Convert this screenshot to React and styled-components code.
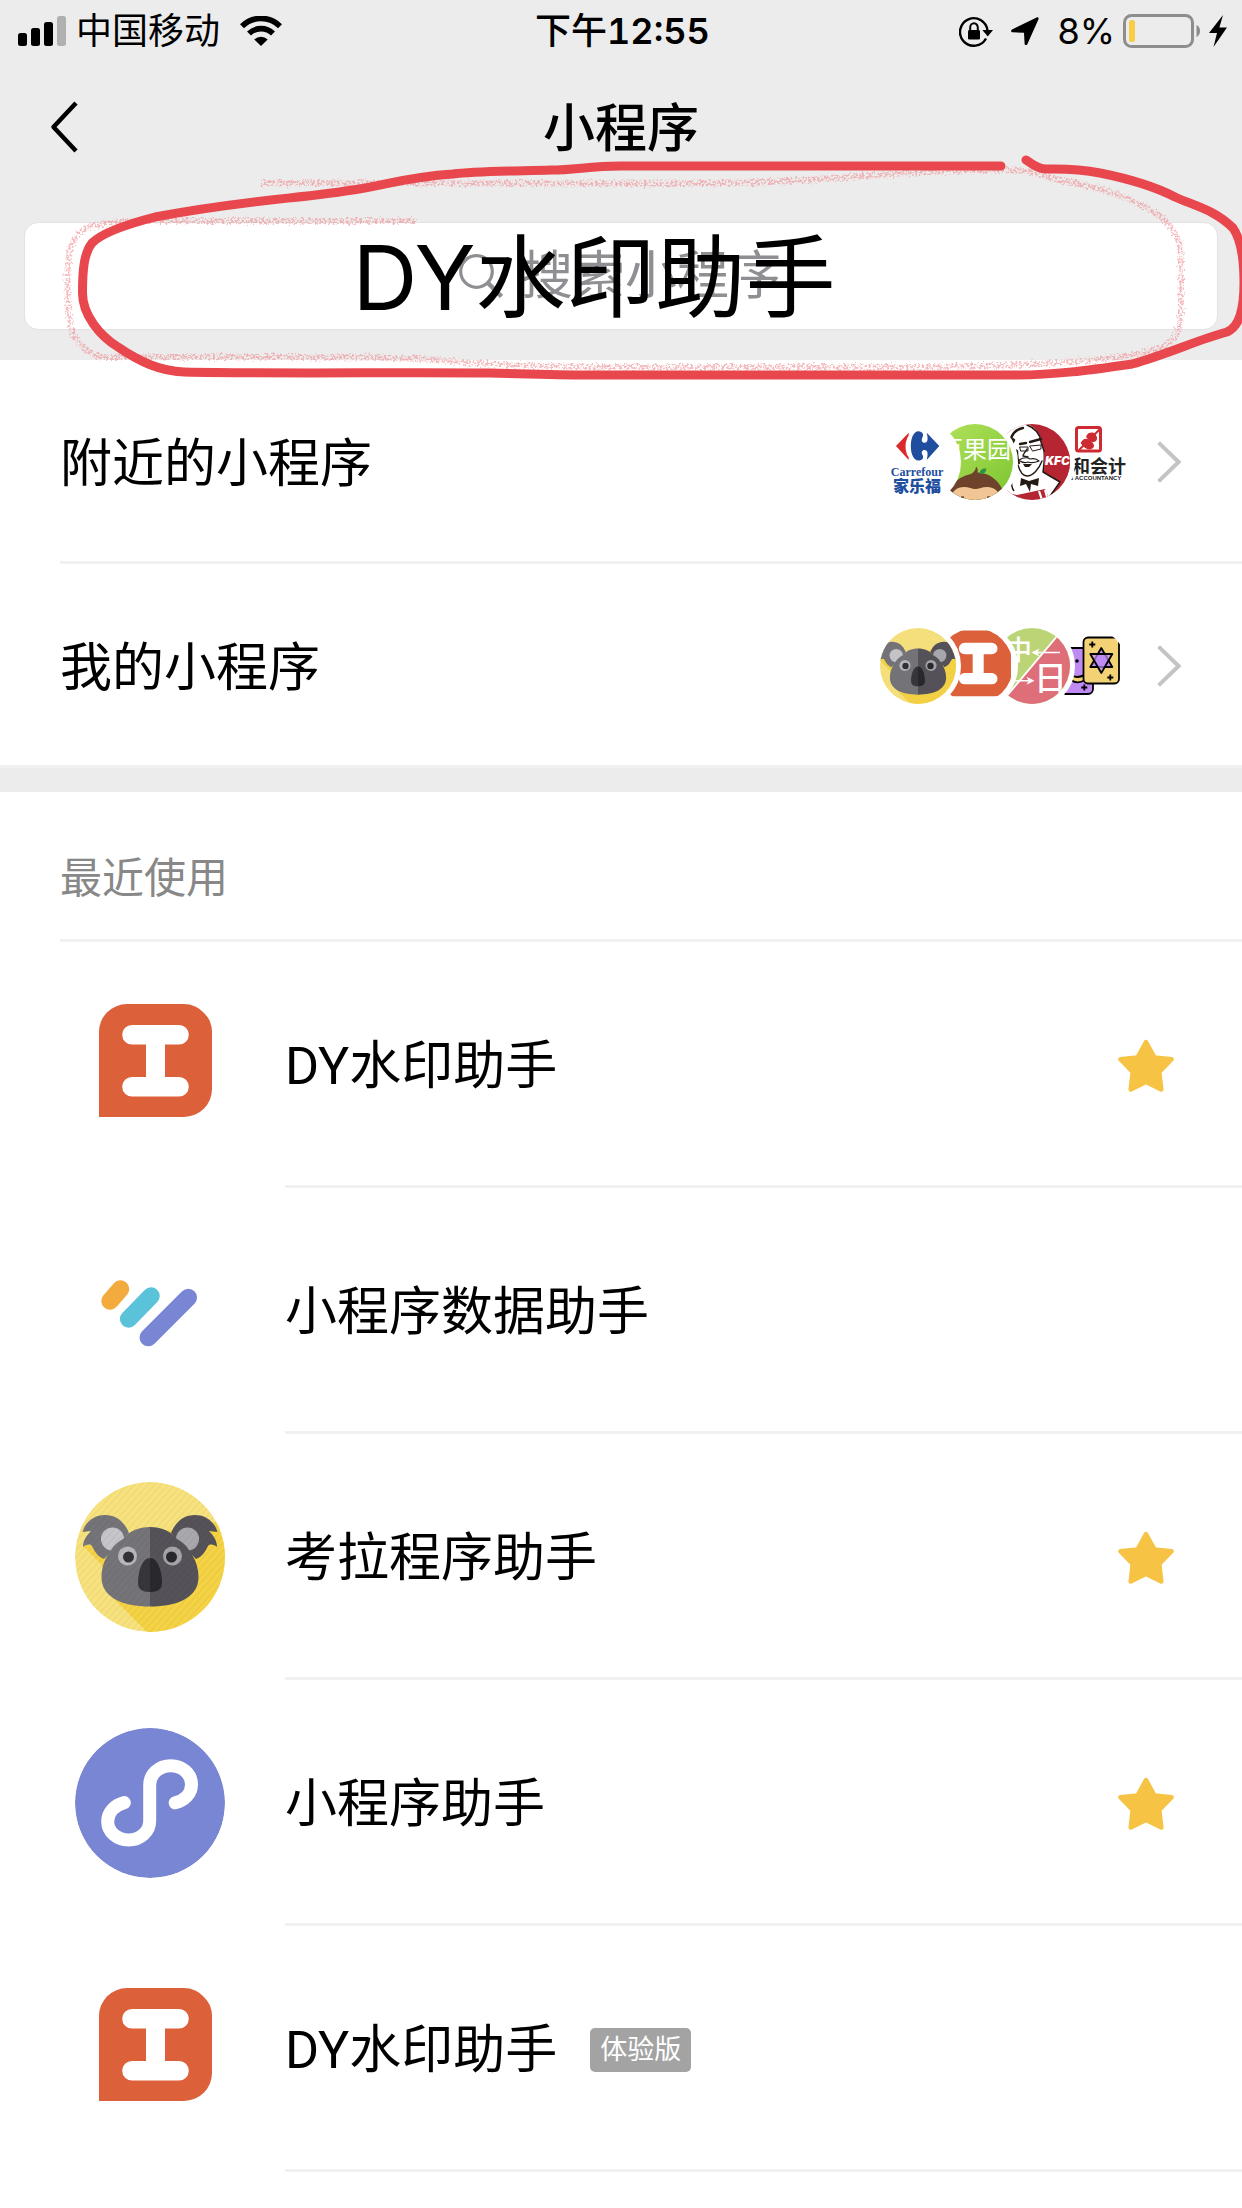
import React from 'react';
import styled, { createGlobalStyle } from 'styled-components';

const GlobalStyle = createGlobalStyle`
  * {
    box-sizing: border-box;
  }
  body {
    margin: 0;
    background: #fff;
    color: #000;
    font-family: Inter, 'Noto Sans CJK SC', sans-serif;
    overflow-x: hidden;
  }
  button {
    margin: 0;
    padding: 0;
    border: 0;
    background: none;
    color: inherit;
    font: inherit;
  }
  svg {
    display: block;
    flex-shrink: 0;
  }
`;

const Header = styled.header`
  position: relative;
  background: #ececec;
  padding-bottom: 30px;
`;

const StatusBar = styled.div`
  display: grid;
  grid-template-columns: 1fr auto 1fr;
  align-items: center;
  height: 62px;
  padding: 0 15px 0 18px;
  font-size: 36px;
  line-height: 60px;
`;

const StatusGroup = styled.div`
  display: flex;
  align-items: center;
  justify-content: ${({ $end }) => ($end ? 'flex-end' : 'flex-start')};
  gap: ${({ $gap }) => $gap}px;
`;

const Time = styled.time`
  font-weight: 500;

  b {
    font-weight: 600;
    font-variant-numeric: tabular-nums;
  }
`;

const NavBar = styled.nav`
  display: grid;
  grid-template-columns: 120px 1fr 120px;
  align-items: center;
  height: 130px;
`;

const BackButton = styled.button`
  padding-left: 50px;
`;

const Title = styled.h1`
  margin: 0;
  padding-top: 4px;
  font-size: 52px;
  font-weight: 500;
  line-height: 72px;
  text-align: center;
`;

const SearchBox = styled.label`
  display: flex;
  align-items: center;
  justify-content: center;
  gap: 18px;
  height: 108px;
  margin: 30px 24px 0;
  border: 1px solid #e2e2e2;
  border-radius: 14px;
  background: #fff;
`;

const SearchInput = styled.input`
  width: 262px;
  padding: 0;
  border: 0;
  outline: 0;
  background: none;
  font-family: inherit;
  font-size: 52px;
  line-height: 72px;

  &::placeholder {
    color: #8e8e93;
    opacity: 1;
  }
`;

const Note = styled.div`
  position: absolute;
  top: 212px;
  left: 0;
  right: 54px;
  z-index: 2;
  font-size: 90px;
  line-height: 132px;
  text-align: center;
  pointer-events: none;
`;

const Scribble = styled.svg`
  position: absolute;
  top: 150px;
  left: 0;
  z-index: 3;
  width: 100%;
  pointer-events: none;
`;

const LinkRow = styled.a`
  display: flex;
  align-items: center;
  height: 204px;
  margin-left: ${({ $inset }) => ($inset ? 60 : 0)}px;
  padding: 3px 61px 0 ${({ $inset }) => ($inset ? 0 : 60)}px;
  border-bottom: 3px solid #f1f1f1;
  color: inherit;
  text-decoration: none;
`;

const RowLabel = styled.span`
  flex: 1;
  padding-top: 3px;
  font-size: 52px;
  line-height: 72px;
`;

const Avatars = styled.span`
  display: flex;
  margin-right: 30px;
`;

const Avatar = styled.span`
  z-index: ${({ $level }) => $level};
  width: 86px;
  height: 86px;
  margin: 0 -5px 0 -24px;
  border: 5px solid #fff;
  border-radius: 50%;
  background: #fff;
  overflow: hidden;
`;

const Gap = styled.div`
  height: 24px;
  background: #ececec;
`;

const SectionTitle = styled.h2`
  margin: 0 0 0 60px;
  padding: 56px 0 31px;
  border-bottom: 3px solid #f1f1f1;
  color: #888;
  font-size: 42px;
  font-weight: 400;
  line-height: 60px;
`;

const AppList = styled.ul`
  margin: 0;
  padding: 0;
  list-style: none;
`;

const AppRow = styled.li`
  display: flex;
  height: 246px;
`;

const AppIcon = styled.div`
  width: 150px;
  height: 150px;
  margin: 48px 60px 0 75px;
  border-radius: 50%;
  overflow: hidden;
`;

const AppBody = styled.div`
  flex: 1;
  display: flex;
  align-items: center;
  padding: 4px 67px 0 0;
  border-bottom: 3px solid #f1f1f1;
`;

const AppName = styled.span`
  padding-top: 3px;
  font-family: Roboto, 'Noto Sans CJK SC', sans-serif;
  font-size: 52px;
  line-height: 72px;
`;

const Tag = styled.span`
  margin-left: 33px;
  padding: 0 10px;
  border-radius: 5px;
  background: #a3a3a3;
  color: #fff;
  font-size: 27px;
  line-height: 44px;
`;

const StarButton = styled.button`
  margin-left: auto;
`;

/* status bar icons */

const SignalIcon = () => (
  <svg width="48" height="30" viewBox="0 0 48 30" aria-hidden="true">
    <rect x="0" y="17" width="9" height="13" rx="2.5" />
    <rect x="13" y="12" width="9" height="18" rx="2.5" />
    <rect x="26" y="6" width="9" height="24" rx="2.5" />
    <rect x="39" y="0" width="9" height="30" rx="2.5" fill="#b0b0b0" />
  </svg>
);

const WifiIcon = () => (
  <svg width="42" height="30" viewBox="0 0 42 30" aria-hidden="true">
    <path d="M2 10.2a27 27 0 0 1 38 0" fill="none" stroke="#000" strokeWidth="5.6" />
    <path d="M9 17.6a17 17 0 0 1 24 0" fill="none" stroke="#000" strokeWidth="5.6" />
    <path d="M14.3 23.4a9.6 9.6 0 0 1 13.4 0L21 30z" />
  </svg>
);

const LockIcon = () => (
  <svg width="34" height="31" viewBox="0 0 34 31" aria-hidden="true">
    <path d="M27 22.5A13.8 13.8 0 1 1 28.6 15" fill="none" stroke="#000" strokeWidth="2.4" />
    <path d="M23.4 14h10.6l-5.3 6.6z" />
    <rect x="9" y="14" width="12" height="9.6" rx="1.4" />
    <path d="M11.2 14.5v-3a3.8 4.2 0 0 1 7.6 0v3" fill="none" stroke="#000" strokeWidth="2" />
  </svg>
);

const LocationIcon = () => (
  <svg width="28" height="28" viewBox="0 0 28 28" aria-hidden="true">
    <path d="M25.6.4 1 12.6c-1.5.9-1 2.5.5 2.6l11.5.6.6 11c.1 1.6 2 1.9 2.7.4L27.5 2.2C28 .8 26.9-.2 25.6.4z" />
  </svg>
);

const BatteryIcon = () => (
  <svg width="78" height="34" viewBox="0 0 78 34" aria-hidden="true">
    <rect x="1.5" y="1.5" width="68" height="31" rx="7" fill="none" stroke="#8d8d8d" strokeWidth="3" />
    <rect x="6" y="6" width="6" height="22" rx="2.5" fill="#f7cd45" />
    <path d="M73.5 11c4.8 2.4 4.8 9.6 0 12z" fill="#8d8d8d" />
  </svg>
);

const BoltIcon = () => (
  <svg width="18" height="32" viewBox="0 0 18 32" aria-hidden="true">
    <path d="M14 0 0 18h8L4.5 32 18 12.5h-7.6z" />
  </svg>
);

/* page icons */

const BackIcon = () => (
  <svg width="28" height="52" viewBox="0 0 28 52" aria-hidden="true">
    <path d="M26 2 3.5 26 26 50" fill="none" stroke="#000" strokeWidth="4.5" strokeLinejoin="round" />
  </svg>
);

const SearchIcon = () => (
  <svg width="44" height="44" viewBox="0 0 44 44" aria-hidden="true">
    <circle cx="17.5" cy="17.5" r="15.8" fill="none" stroke="#8e8e93" strokeWidth="3.2" />
    <path d="m28.5 28.5 14 14" stroke="#8e8e93" strokeWidth="4.5" />
  </svg>
);

const ChevronIcon = () => (
  <svg width="24" height="42" viewBox="0 0 24 42" aria-hidden="true">
    <path d="m1.6 1.6 20 19.4-20 19.4" fill="none" stroke="#c4c4c6" strokeWidth="4" />
  </svg>
);

const StarIcon = () => (
  <svg width="58" height="56" viewBox="0 0 58 56" aria-hidden="true">
    <path
      d="M29 4l8.4 15.4 17.2 1.9-12.3 12.6 2 17.6L29 43.9 13.7 51.5l2-17.6L3.4 21.3l17.2-1.9z"
      fill="#f6c344"
      stroke="#f6c344"
      strokeWidth="4.5"
      strokeLinejoin="round"
    />
  </svg>
);

/* mini program logos, all drawn on a 150 unit square */

const Logo = ({ size = 150, children }) => (
  <svg
    width={size}
    height={size}
    viewBox={size < 150 ? '9.5 9.5 131 131' : '0 0 150 150'}
    aria-hidden="true"
  >
    {children}
  </svg>
);

const WatermarkLogo = ({ size }) => (
  <Logo size={size}>
    <path d="M24 127V42a28 28 0 0 1 28-28h57a28 28 0 0 1 28 28v57a28 28 0 0 1-28 28z" fill="#dc6039" />
    <path
      d="M57 35h47a9.8 9.8 0 0 1 0 19.6H90V87h14a9.8 9.8 0 0 1 0 19.6H57A9.8 9.8 0 0 1 57 87h14V54.6H57A9.8 9.8 0 0 1 57 35z"
      fill="#fff"
    />
  </Logo>
);

const DataLogo = () => (
  <Logo>
    <g strokeWidth="17.5" strokeLinecap="round">
      <path d="M45.5 53 35 65" stroke="#f3ab3e" />
      <path d="M76 60 53.6 83" stroke="#5ac2d9" />
      <path d="M113.3 61.5 73.3 101.5" stroke="#7986d4" />
    </g>
  </Logo>
);

const KoalaLogo = ({ size }) => {
  const id = `stripes${size || ''}`;
  return (
    <Logo size={size}>
      <defs>
        <pattern id={id} width="5" height="5" patternUnits="userSpaceOnUse" patternTransform="rotate(42)">
          <rect width="2" height="5" fill="#000" opacity="0.03" />
        </pattern>
      </defs>
      <circle cx="75" cy="75" r="75" fill="#f8e27e" />
      <path d="M8 64l18 18 13 35 33 33h78V40h-8z" fill="#f5d345" />
      <path
        d="M54 51C49 39 41 33 30 33 18 33 10 41 7.5 50L16 49C11 54 8 59 8 65c4-3 7-3 9-1 3 6 6 11 12 13z"
        fill="#757479"
      />
      <path
        d="M96 51c5-12 13-18 24-18 12 0 20 8 22.5 17l-8.5-1c5 5 8 10 8 16-4-3-7-3-9-1-3 6-6 11-12 13z"
        fill="#555359"
      />
      <circle cx="37.5" cy="57" r="11.5" fill="#c6c5c9" />
      <circle cx="112.5" cy="57" r="11.5" fill="#a9a8ad" />
      <path
        d="M75 45C64 45 54 49 48 57c-5 3-9 6-12 11-6 8-9.5 17-9.5 27 0 20 20 29.5 48.5 29.5z"
        fill="#757479"
      />
      <path
        d="M75 45c11 0 21 4 27 12 5 3 9 6 12 11 6 8 9.5 17 9.5 27 0 20-20 29.5-48.5 29.5z"
        fill="#555359"
      />
      <circle cx="52.5" cy="74" r="9.5" fill="#b9b8bd" />
      <circle cx="97.5" cy="74" r="9.5" fill="#a5a4a9" />
      <circle cx="53.5" cy="75" r="5.5" fill="#333236" />
      <circle cx="96.5" cy="75" r="5.5" fill="#29282c" />
      <path d="M75 76c-8 0-12 14-12 25 0 6 4 9 12 9z" fill="#37363a" />
      <path d="M75 76c8 0 12 14 12 25 0 6-4 9-12 9z" fill="#29282c" />
      <circle cx="75" cy="75" r="75" fill={`url(#${id})`} />
    </Logo>
  );
};

const HelperLogo = () => (
  <Logo>
    <circle cx="75" cy="75" r="75" fill="#7986d4" />
    <path
      d="M49.3 74.6C40 77 32.7 84 32.7 93.5c0 10.5 9.3 18.5 21 18.5s21-8.5 21-19V57c0-11 9.3-19.3 21-19.3s20.8 8.3 20.8 18.8c0 9.5-7.3 16-16.3 18.3"
      fill="none"
      stroke="#fff"
      strokeWidth="13"
      strokeLinecap="round"
    />
  </Logo>
);

/* small avatars, 76 unit square */

const Mini = ({ children }) => (
  <svg width="76" height="76" viewBox="0 0 76 76" aria-hidden="true">
    {children}
  </svg>
);

const CarrefourLogo = () => (
  <Mini>
    <path d="M16 22 28.7 8.7v2.5C24.5 18 24.5 27 28.7 33.5V36z" fill="#dc2a2c" />
    <path
      d="M38.5 7.2c4 .2 5.5 3.2 4 6-1.5 3-.5 5.5 2 5.5 3 0 4-3 2.2-10L59.3 22 46.7 36c1.8-7 .8-10-2.2-10-2.5 0-3.5 2.5-2 5 1.5 3 0 5.5-4 5.5-5 0-7.7-7-7.7-14.5s2.7-14.8 7.7-14.8z"
      fill="#1f4e9f"
    />
    <text x="37" y="52" textAnchor="middle" fontFamily="'Liberation Serif', serif" fontSize="12" fontWeight="700" fill="#1f4e9f">
      Carrefour
    </text>
    <text x="37" y="68" textAnchor="middle" fontSize="16" fontWeight="900" fill="#1f4e9f">
      家乐福
    </text>
  </Mini>
);

const FruitLogo = () => (
  <Mini>
    <defs>
      <linearGradient id="fruit" x1="0" y1="0" x2="1" y2="1">
        <stop offset="0" stopColor="#b3e25a" />
        <stop offset="1" stopColor="#7cc531" />
      </linearGradient>
    </defs>
    <rect width="76" height="76" fill="url(#fruit)" />
    <text x="2" y="34" fontSize="24" fill="#fff">
      百果园
    </text>
    <path d="M8 76C14 58 24 52 34 50c3-2 5-4 5-7.500 2 2 2 4 1.500 6 14 1 24 9 29 27.500z" fill="#6d432b" />
    <path d="M14 76c0-9 6-13 13-13 5 0 8 2 11 2 4 0 7-2 12-2 8 0 13 5 13 13z" fill="#f2c694" />
    <path d="M42.5 50c0-4 3-6 7-5.500-.5 4-3 6-7 5.500z" fill="#2f9145" />
    <path d="M24 73.5h3M50 73.5h3" stroke="#3a2016" strokeWidth="2" />
  </Mini>
);

const KfcLogo = () => (
  <Mini>
    <rect width="76" height="76" fill="#b62632" />
    <path d="M0 0h33c8 3 13 9 14 17l4 14-2 17 17 10-12 18H0z" fill="#fff" />
    <g fill="none" stroke="#231a14" strokeLinecap="round" strokeLinejoin="round">
      <path d="M33 1c8 3 13 9 14 17l3 9c1 7 0 14-1 21l17 10-12 17" strokeWidth="1.5" />
      <path d="M29 4c-6 1-10 5-12 10l3 2c-2 3-2 6-1 9l4 2c0 4 0 8 2 12" strokeWidth="2.4" />
      <path d="M18 31l3 10c-3 8-8 12-13 18" strokeWidth="2" />
      <path d="M26 20l6-1M36 18l11-3" strokeWidth="2.4" />
      <path d="M26 23h8v4h-7zM36 22l11-1v4l-8 2z" strokeWidth="1" />
      <path d="M33 25c-2 4-4 5-4 7l5 1" strokeWidth="1.4" />
      <path d="M25 36c5-3 8-3 11-1 4-1 7 0 9 2-5 2-8 2-11 1-3 1-6 1-9-2z" strokeWidth="1.2" />
      <path d="M24 41c2 7 5 11 9 11 6 0 12-7 15-15" strokeWidth="1.4" />
    </g>
    <path d="M29 40h9l-3 3h-4zM27 54l8 3 10-3-1 8-7-2-1 8-4-8-6 2z" fill="#231a14" />
    <path d="M18 54c-1 5-1 9 2 13" fill="none" stroke="#231a14" strokeWidth="1.5" />
    <path d="M3 67l20 4 28-6 5 11H0z" fill="#b62632" />
    <path d="M45 67l3 9M51 66l3 10" stroke="#fff" strokeWidth="2.2" />
    <path d="M50 28l26-2v26l-26-5z" fill="#b62632" />
    <text x="51" y="41" fontSize="12" fontWeight="900" fontStyle="italic" fill="#fff">
      KFC
    </text>
  </Mini>
);

const AccountLogo = () => (
  <Mini>
    <rect x="25.5" y="3.5" width="24" height="23.5" rx="2" fill="none" stroke="#cd2b31" strokeWidth="3" />
    <path d="M31 17c2-3 6-3 9 0s4 5 2 7-6 2-9-1-4-4-2-6z" fill="#cd2b31" />
    <path d="M36 11c2-3 6-3 8-1s3 5 1 7-5 1-7-1-4-3-2-5z" fill="#cd2b31" />
    <path d="M28 26l6-6M43 11l6-6M38 17l2-2" stroke="#cd2b31" strokeWidth="2" />
    <text x="21" y="49" fontSize="18" fontWeight="700" fill="#222">
      和会计
    </text>
    <text x="18" y="56" fontFamily="'Liberation Sans', sans-serif" fontSize="6" fontWeight="700" fill="#222">
      &amp; ACCOUNTANCY
    </text>
  </Mini>
);

const TranslateLogo = () => (
  <Mini>
    <rect width="76" height="76" fill="#bbd476" />
    <path d="M70 0h6v76H6z" fill="#de6e78" />
    <path d="M70 0 6 76" stroke="#fff" strokeWidth="1.8" />
    <path d="M66 24.5H39M21 52.7h17" stroke="#fff" strokeWidth="1.4" />
    <path d="M37.5 24.5l8-4-2 4 2 4zM40.5 52.7l-8-4 2 4-2 4z" fill="#fff" />
    <text x="11" y="32" fontSize="27" fontWeight="500" fill="#fff">
      中
    </text>
    <text x="40" y="62" fontSize="33" fontWeight="500" fill="#fff">
      日
    </text>
  </Mini>
);

const TarotLogo = () => (
  <Mini>
    <g stroke="#000" strokeWidth="1.8" strokeLinejoin="round">
      <rect x="6" y="20" width="36" height="46" rx="5" fill="#bf8bf3" />
      <path d="M20 46c3 4 10 4 14 0v6c-5 3-10 3-14 0z" fill="#f3d276" />
      <rect x="32.5" y="9.5" width="35.5" height="46" rx="4.5" fill="#f3d276" />
      <path d="M50.3 20 61.3 39H39.3z" fill="#bf8bf3" />
      <path d="M50.3 45 39.3 26h22z" fill="#bf8bf3" fillOpacity="0.7" />
      <path d="M41.3 13.5v6M38.3 16.5h6M59.3 46.5v6M56.3 49.5h6M33.3 56.5v6M30.3 59.5h6" />
    </g>
    <circle cx="26" cy="33" r="1.8" />
  </Mini>
);

const pencilPath =
  'M261 33L620 33.5C720 34 790 32 838 28S940 20 997 20C1040 19 1045 28 1064 31C1100 37 1120 44 1151 60C1170 72 1181 88 1181 105V160C1181 175 1177 190 1163 197C1140 206 1090 211 1056 213C980 218 900 217 620 217C560 217 500 215 450 211C400 207 350 207 286 207H102C85 203 74 190 71 177C66 150 67 120 69 105C72 85 85 76 102 74C120 71 135 71 151 71H416';

const markerPath =
  'M1001 16H620C590 16 575 20 551 20C520 21 475 21 453 24C408 27 390 34 359 39C300 49 250 49 155 67C120 76 100 85 92 93C84 103 82.5 120 82.5 143C82.5 165 100 186 118 197C140 212 160 221 184 222C280 224 400 222 490 223C530 224 560 225 584 225H1017C1056 225 1090 220 1132 214C1165 205 1200 189 1227 182C1241 176 1244 155 1244 133C1244 105 1240 88 1233 78C1215 60 1195 56 1175 47C1150 34 1120 27 1100 23C1075 18 1055 19 1045 19C1035 18 1030 12 1026 10';

const Circle = () => (
  <Scribble viewBox="0 0 1242 240" aria-hidden="true">
    <defs>
      <filter id="pencil" filterUnits="userSpaceOnUse" x="0" y="0" width="1242" height="240">
        <feTurbulence type="fractalNoise" baseFrequency="0.45" numOctaves="2" seed="4" result="noise" />
        <feDisplacementMap in="SourceGraphic" in2="noise" scale="7" xChannelSelector="R" yChannelSelector="G" result="rough" />
        <feColorMatrix in="noise" type="matrix" values="0 0 0 0 0  0 0 0 0 0  0 0 0 0 0  0 0 0 6 -2.5" result="grain" />
        <feComposite in="rough" in2="grain" operator="in" />
      </filter>
    </defs>
    <path d={pencilPath} fill="none" stroke="#ee8d92" strokeOpacity="0.6" strokeWidth="6" filter="url(#pencil)" />
    <path d={markerPath} fill="none" stroke="#e8474d" strokeWidth="9" strokeLinecap="round" />
  </Scribble>
);

const links = [
  { label: '附近的小程序', icons: [CarrefourLogo, FruitLogo, KfcLogo, AccountLogo] },
  { label: '我的小程序', icons: [KoalaLogo, WatermarkLogo, TranslateLogo, TarotLogo] },
];

const apps = [
  { name: 'DY水印助手', icon: WatermarkLogo, starred: true },
  { name: '小程序数据助手', icon: DataLogo },
  { name: '考拉程序助手', icon: KoalaLogo, starred: true },
  { name: '小程序助手', icon: HelperLogo, starred: true },
  { name: 'DY水印助手', icon: WatermarkLogo, tag: '体验版' },
];

const App = () => (
  <>
    <GlobalStyle />
    <Header>
      <StatusBar>
        <StatusGroup $gap={10}>
          <SignalIcon />
          <StatusGroup $gap={20}>
            <span>中国移动</span>
            <WifiIcon />
          </StatusGroup>
        </StatusGroup>
        <Time>
          下午<b>12:55</b>
        </Time>
        <StatusGroup $end $gap={18}>
          <LockIcon />
          <LocationIcon />
          <StatusGroup $gap={8}>
            <span>8%</span>
            <BatteryIcon />
            <BoltIcon />
          </StatusGroup>
        </StatusGroup>
      </StatusBar>
      <NavBar>
        <BackButton aria-label="返回">
          <BackIcon />
        </BackButton>
        <Title>小程序</Title>
      </NavBar>
      <SearchBox>
        <SearchIcon />
        <SearchInput type="text" placeholder="搜索小程序" aria-label="搜索小程序" />
      </SearchBox>
      <Note>DY水印助手</Note>
      <Circle />
    </Header>
    <main>
      {links.map(({ label, icons }, i) => (
        <LinkRow key={label} href="#" $inset={i === 0}>
          <RowLabel>{label}</RowLabel>
          <Avatars>
            {icons.map((Icon, n) => (
              <Avatar key={n} $level={icons.length - n}>
                <Icon size={76} />
              </Avatar>
            ))}
          </Avatars>
          <ChevronIcon />
        </LinkRow>
      ))}
      <Gap />
      <SectionTitle>最近使用</SectionTitle>
      <AppList>
        {apps.map(({ name, icon: Icon, starred, tag }, i) => (
          <AppRow key={i}>
            <AppIcon>
              <Icon />
            </AppIcon>
            <AppBody>
              <AppName>{name}</AppName>
              {tag && <Tag>{tag}</Tag>}
              {starred && (
                <StarButton aria-label="取消星标">
                  <StarIcon />
                </StarButton>
              )}
            </AppBody>
          </AppRow>
        ))}
      </AppList>
    </main>
  </>
);

export default App;
